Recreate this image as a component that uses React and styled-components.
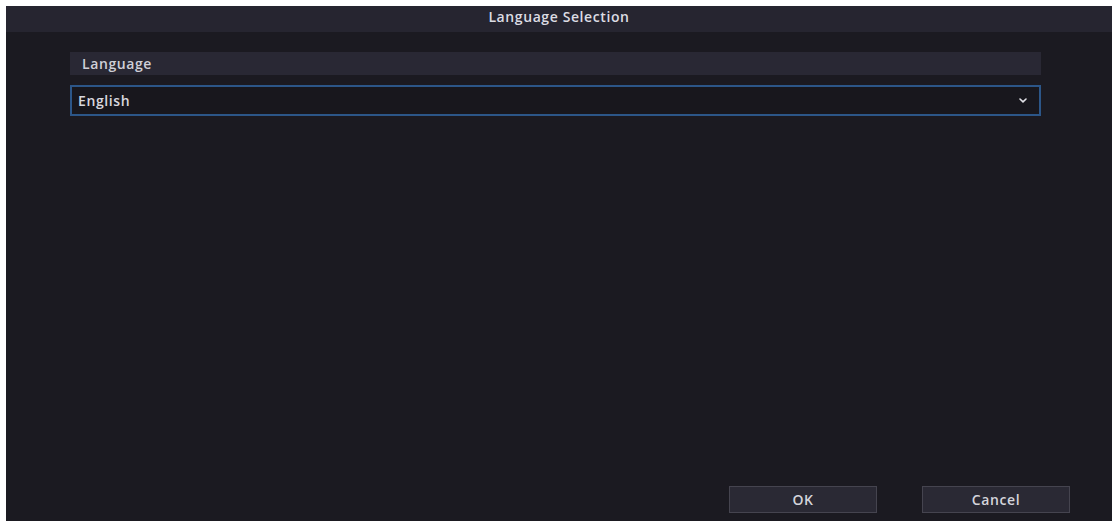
import React from 'react';
import styled, { createGlobalStyle } from 'styled-components';

const GlobalStyle = createGlobalStyle`
    html, body {
        margin: 0;
        padding: 0;
        background: #ffffff;
    }
    body {
        font-family: "Open Sans", "Noto Sans", sans-serif;
    }
`;

const Page = styled.div`
    width: 1114px;
    height: 523px;
    padding: 6px 2px 2px 6px;
    box-sizing: border-box;
`;

const Dialog = styled.div`
    display: flex;
    flex-direction: column;
    height: 100%;
    background: #1b1a21;
`;

const Header = styled.div`
    height: 26px;
    display: flex;
    align-items: flex-start;
    justify-content: center;
    padding-top: 1px;
    box-sizing: border-box;
    background: #262530;
    color: #dcdce3;
    font-size: 14px;
    font-weight: 600;
    letter-spacing: .6px;
`;

const Body = styled.div`
    flex: 1;
    display: flex;
    flex-direction: column;
    padding: 20px 71px 0 64px;
`;

const SectionLabel = styled.div`
    height: 23px;
    display: flex;
    align-items: center;
    padding-left: 12px;
    background: #292834;
    color: #cfcfd7;
    font-size: 14px;
    font-weight: 600;
    letter-spacing: .6px;
`;

const Select = styled.div`
    margin-top: 10px;
    height: 31px;
    display: flex;
    align-items: center;
    justify-content: space-between;
    padding: 0 12px 0 6px;
    box-sizing: border-box;
    border: 2px solid #2c5688;
    background: #18171d;
    color: #d8d8df;
    font-size: 14px;
    font-weight: 600;
    letter-spacing: .6px;
`;

const Footer = styled.div`
    display: flex;
    justify-content: flex-end;
    gap: 45px;
    padding: 0 42px 8px 0;
`;

const Button = styled.button`
    width: 148px;
    height: 27px;
    background: #2a2934;
    border: 1px solid #45444f;
    color: #d4d4db;
    font-family: inherit;
    font-size: 14px;
    font-weight: 600;
    letter-spacing: .6px;
    cursor: pointer;
`;

const Chevron = () => (
    <svg width="8" height="5" viewBox="0 0 8 5">
        <path d="M1 1 L4 3.8 L7 1" fill="none" stroke="#e2e2e8" strokeWidth="1.6" strokeLinecap="round" strokeLinejoin="round" />
    </svg>
);

const App = () => {

    return <Page>
        <GlobalStyle />
        <Dialog>
            <Header>Language Selection</Header>
            <Body>
                <SectionLabel>Language</SectionLabel>
                <Select>
                    <span>English</span>
                    <Chevron />
                </Select>
            </Body>
            <Footer>
                <Button>OK</Button>
                <Button>Cancel</Button>
            </Footer>
        </Dialog>
    </Page>
};

export default App;
